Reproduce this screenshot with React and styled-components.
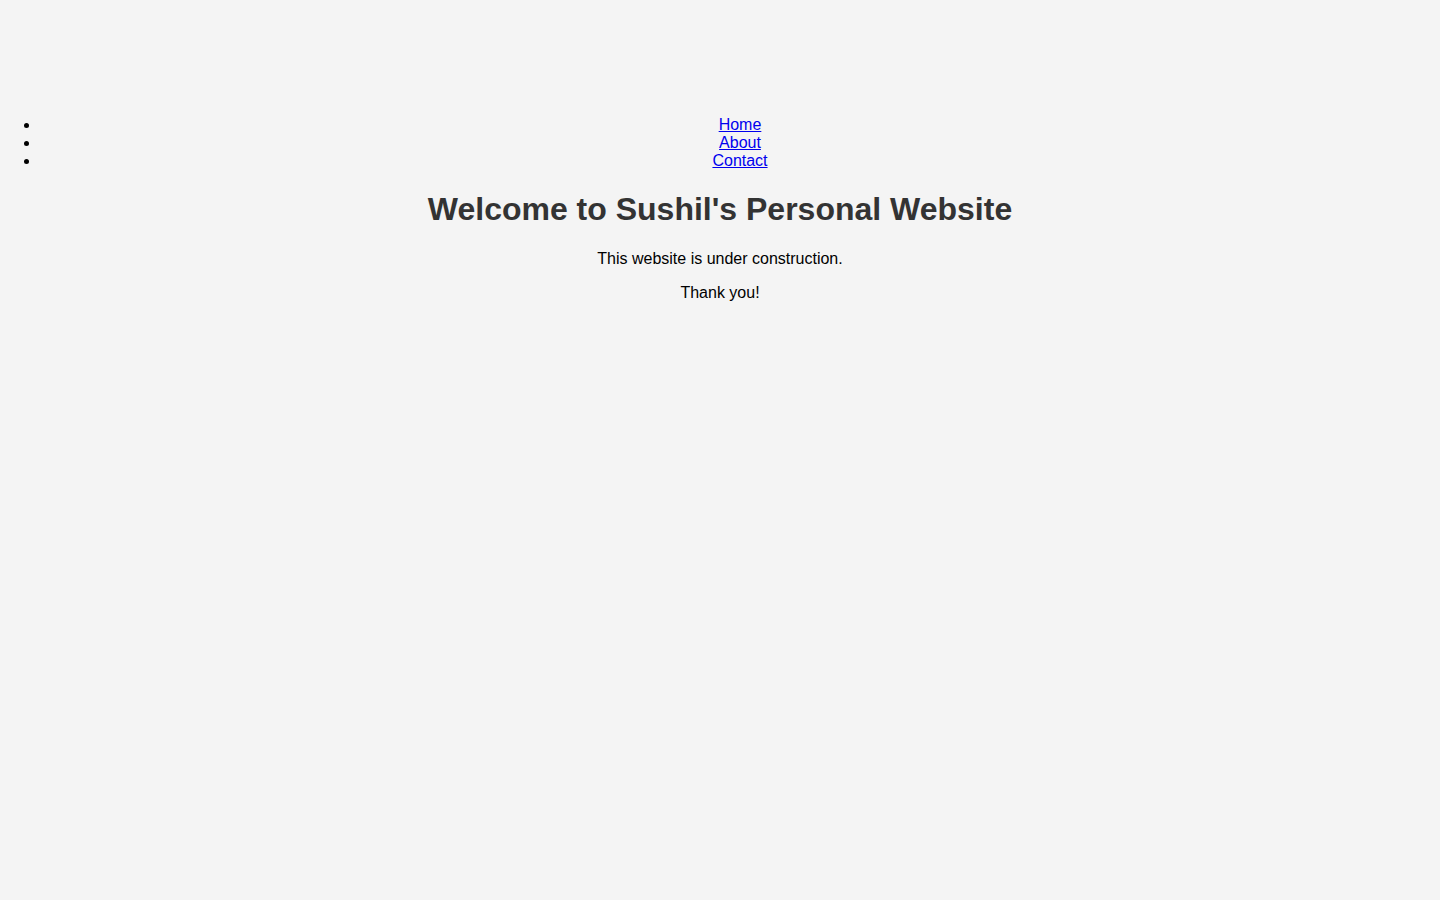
import React from 'react';
import styled, { createGlobalStyle } from 'styled-components';

const GlobalStyle = createGlobalStyle`
  body {
    margin: 0;
    padding: 0;
    background-color: #f4f4f4;
    font-family: "Liberation Sans", Arial, sans-serif;
  }
`;

const Header = styled.header`
  height: 100px;
`;

const NavList = styled.ul`
  margin: 16px 0;
  padding-left: 40px;
  text-align: center;
`;

const NavLink = styled.a`
  color: #0000ee;
  text-decoration: underline;
`;

const Main = styled.main`
  text-align: center;
`;

const Title = styled.h1`
  font-size: 32px;
  margin: 21.44px 0;
  color: #333;
`;

const Text = styled.p`
  margin: 16px 0;
  color: #000;
`;

const links = ['Home', 'About', 'Contact'];

export default function App() {
  return (
    <>
      <GlobalStyle />
      <Header />
      <nav>
        <NavList>
          {links.map((l) => (
            <li key={l}>
              <NavLink href="#">{l}</NavLink>
            </li>
          ))}
        </NavList>
      </nav>
      <Main>
        <Title>Welcome to Sushil's Personal Website</Title>
        <Text>This website is under construction.</Text>
        <Text>Thank you!</Text>
      </Main>
    </>
  );
}
